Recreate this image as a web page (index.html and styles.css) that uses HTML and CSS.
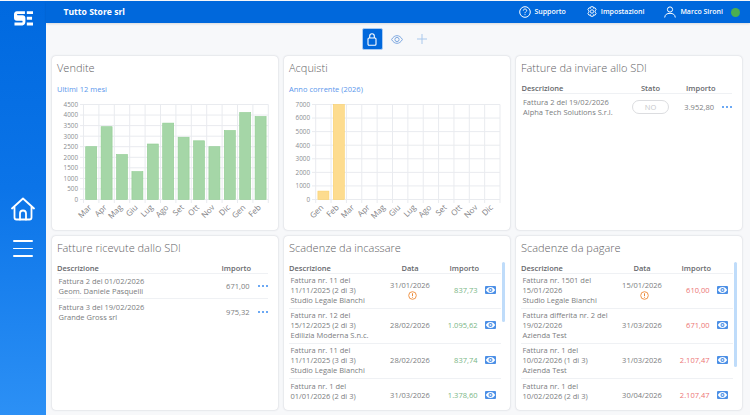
FILE: index.html
```html
<!DOCTYPE html>
<html lang="it">
<head>
<meta charset="utf-8">
<title>Tutto Store srl</title>
<link rel="stylesheet" href="styles.css">
</head>
<body>
<svg class="defs" width="0" height="0" aria-hidden="true">
  <symbol id="eye-btn" viewBox="0 0 11 8">
    <rect width="11" height="8" rx="1" fill="#4b8fe6"/>
    <path d="M.8 4C2.4 1.6 3.9 1 5.5 1s3.100.6 4.700 3C8.600 6.400 7.100 7 5.500 7S2.400 6.400.8 4z" fill="#fff"/>
    <circle cx="5.500" cy="4" r="2" fill="#4b8fe6"/>
    <circle cx="5.500" cy="4" r="1" fill="#dbe9fb"/>
  </symbol>
  <symbol id="warn" viewBox="0 0 9 9">
    <circle cx="4.500" cy="4.500" r="3.800" fill="none" stroke="#f0964a" stroke-width="1"/>
    <path d="M4.500 2.300v2.900M4.500 6v.7" stroke="#e9873a" stroke-width="1"/>
  </symbol>
</svg>
<div class="app">
  <aside class="sidebar">
    <svg class="logo" width="19" height="14.500" viewBox="0 0 20 15">
      <path d="M3 0h8.500v3H3.800a.6.6 0 0 0 0 1.300H9c2 0 3 1.300 3 3.300V11c0 2.400-1.200 4-3.200 4H.5v-3h8.100c.6 0 .6-1.800 0-1.800H3C1 10.200 0 9 0 7V3.500C0 1.300 1 0 3 0z" fill="#fff"/>
      <path d="M13.500 0H20v3h-6.500zM13.500 6H19v3h-5.500zM13.500 12H20v3h-6.500z" fill="#fff"/>
    </svg>
    <nav class="side-nav">
      <svg width="24" height="24" viewBox="0 0 24 24" fill="none" stroke="#fff" stroke-width="1.800" stroke-linejoin="round" stroke-linecap="round">
        <path d="M1 11.500 12 1.500l11 10M3.500 9.500v11a2 2 0 0 0 2 2h13a2 2 0 0 0 2-2v-11"/>
        <path d="M9 22.500v-6a3 3 0 0 1 6 0v6"/>
      </svg>
      <div class="burger"><span></span><span></span><span></span></div>
    </nav>
  </aside>
  <div class="content">
    <header class="topbar">
      <div class="company">Tutto Store srl</div>
      <div class="top-links">
        <a class="top-link">
          <svg width="12" height="12" viewBox="0 0 12 12" fill="none" stroke="#fff"><circle cx="6" cy="6" r="5.300"/><path d="M4.300 4.600C4.400 3.600 5.100 3 6 3c1 0 1.700.7 1.700 1.500C7.700 5.700 6 5.800 6 7.200M6 8.200v.9"/></svg>
          <span>Supporto</span>
        </a>
        <a class="top-link">
          <svg width="12" height="12" viewBox="0 0 12 12" fill="none" stroke="#fff" stroke-width=".9"><path d="M4.800.7h2.400l.3 1.600 1.500-.6 1.200 2-1.200 1.100v1.400l1.200 1.100-1.200 2-1.500-.6-.3 1.600H4.800l-.3-1.600-1.500.6-1.200-2 1.200-1.100V4.800L1.800 3.700l1.200-2 1.500.6z"/><circle cx="6" cy="5.500" r="1.700"/></svg>
          <span>Impostazioni</span>
        </a>
        <a class="top-link user-link">
          <svg width="12" height="12" viewBox="0 0 12 12" fill="none" stroke="#fff"><circle cx="6" cy="3.500" r="2.600"/><path d="M.7 11.500C1 8.500 3 7.300 6 7.300s5 1.200 5.300 4.200"/></svg>
          <span>Marco Sironi</span>
          <i class="status"></i>
        </a>
      </div>
    </header>
    <div class="toolbar">
      <button class="tool tool-active">
        <svg width="10" height="13" viewBox="0 0 10 13" fill="none" stroke="#fff" stroke-width="1.100"><rect x="1" y="5" width="8" height="7.300" rx="1"/><path d="M2.700 5V3a2.300 2.300 0 0 1 4.600 0v2"/></svg>
      </button>
      <button class="tool">
        <svg width="12" height="9" viewBox="0 0 12 9" fill="none" stroke="#7ea8e0"><path d="M.6 4.500C2.200 1.700 4 .7 6 .7s3.800 1 5.400 3.800C9.800 7.300 8 8.300 6 8.300S2.200 7.300.6 4.500z"/><circle cx="6" cy="4.500" r="2.100"/></svg>
      </button>
      <button class="tool">
        <svg width="10" height="10" viewBox="0 0 10 10" stroke="#a9c8ec" stroke-width="1"><path d="M5 0v10M0 5h10"/></svg>
      </button>
    </div>
    <main class="grid">
      <section class="card">
        <h2 class="card-title">Vendite</h2>
        <p class="card-sub">Ultimi 12 mesi</p>
        <svg class="chart" width="226" height="128" viewBox="0 0 226 128">
          <path class="grid-line" d="M31.500 6.500V105M46.900 6.500V105M62.300 6.500V105M77.700 6.500V105M93.100 6.500V105M108.500 6.500V105M123.900 6.500V105M139.300 6.500V105M154.700 6.500V105M170.100 6.500V105M185.500 6.500V105M200.900 6.500V105M216.300 6.500V105M28 6.500H216.300M28 17.060H216.300M28 27.600H216.300M28 38.200H216.300M28 48.700H216.300M28 59.300H216.300M28 69.800H216.300M28 80.400H216.300M28 90.900H216.300M28 101.500H216.300"/>
          <g class="bars-green">
            <rect x="33.700" y="48.700" width="11" height="52.800"/><rect x="49.100" y="28.700" width="11" height="72.800"/><rect x="64.500" y="56.500" width="11" height="45"/><rect x="79.900" y="73.600" width="11" height="27.900"/><rect x="95.300" y="46" width="11" height="55.500"/><rect x="110.700" y="25.100" width="11" height="76.400"/><rect x="126.100" y="39.200" width="11" height="62.300"/><rect x="141.500" y="42.800" width="11" height="58.700"/><rect x="156.900" y="48.700" width="11" height="52.800"/><rect x="172.300" y="32.500" width="11" height="69"/><rect x="187.700" y="14.500" width="11" height="87"/><rect x="203.100" y="18.500" width="11" height="83"/>
          </g>
          <g class="y-labels">
            <text x="26" y="8.800">4500</text><text x="26" y="19.400">4000</text><text x="26" y="29.900">3500</text><text x="26" y="40.500">3000</text><text x="26" y="51">2500</text><text x="26" y="61.600">2000</text><text x="26" y="72.100">1500</text><text x="26" y="82.700">1000</text><text x="26" y="93.200">500</text><text x="26" y="103.800">0</text>
          </g>
          <g class="x-labels">
            <text transform="translate(40 110) rotate(-45)">Mar</text><text transform="translate(55.400 110) rotate(-45)">Apr</text><text transform="translate(70.800 110) rotate(-45)">Mag</text><text transform="translate(86.200 110) rotate(-45)">Giu</text><text transform="translate(101.600 110) rotate(-45)">Lug</text><text transform="translate(117 110) rotate(-45)">Ago</text><text transform="translate(132.400 110) rotate(-45)">Set</text><text transform="translate(147.800 110) rotate(-45)">Ott</text><text transform="translate(163.200 110) rotate(-45)">Nov</text><text transform="translate(178.600 110) rotate(-45)">Dic</text><text transform="translate(194 110) rotate(-45)">Gen</text><text transform="translate(209.400 110) rotate(-45)">Feb</text>
          </g>
        </svg>
      </section>

      <section class="card">
        <h2 class="card-title">Acquisti</h2>
        <p class="card-sub">Anno corrente (2026)</p>
        <svg class="chart" width="226" height="128" viewBox="0 0 226 128">
          <path class="grid-line" d="M31.700 6.500V105M47.060 6.500V105M62.420 6.500V105M77.780 6.500V105M93.140 6.500V105M108.500 6.500V105M123.860 6.500V105M139.220 6.500V105M154.580 6.500V105M169.940 6.500V105M185.300 6.500V105M200.660 6.500V105M216 6.500V105M28 6.500H216M28 20.070H216M28 33.640H216M28 47.210H216M28 60.790H216M28 74.360H216M28 87.930H216M28 101.500H216"/>
          <g class="bars-yellow">
            <rect x="33.900" y="93.100" width="11" height="8.400"/><rect x="49.300" y="6.500" width="11" height="95"/>
          </g>
          <g class="y-labels">
            <text x="26" y="8.800">7000</text><text x="26" y="22.400">6000</text><text x="26" y="35.900">5000</text><text x="26" y="49.500">4000</text><text x="26" y="63.100">3000</text><text x="26" y="76.700">2000</text><text x="26" y="90.200">1000</text><text x="26" y="103.800">0</text>
          </g>
          <g class="x-labels">
            <text transform="translate(40 110) rotate(-45)">Gen</text><text transform="translate(55.400 110) rotate(-45)">Feb</text><text transform="translate(70.800 110) rotate(-45)">Mar</text><text transform="translate(86.200 110) rotate(-45)">Apr</text><text transform="translate(101.600 110) rotate(-45)">Mag</text><text transform="translate(117 110) rotate(-45)">Giu</text><text transform="translate(132.400 110) rotate(-45)">Lug</text><text transform="translate(147.800 110) rotate(-45)">Ago</text><text transform="translate(163.200 110) rotate(-45)">Set</text><text transform="translate(178.600 110) rotate(-45)">Ott</text><text transform="translate(194 110) rotate(-45)">Nov</text><text transform="translate(209.400 110) rotate(-45)">Dic</text>
          </g>
        </svg>
      </section>

      <section class="card">
        <h2 class="card-title">Fatture da inviare allo SDI</h2>
        <div class="doc-table send-table">
          <div class="doc-head"><span>Descrizione</span><span class="center">Stato</span><span class="right">Importo</span><span></span></div>
          <div class="doc-row">
            <div class="desc">Fattura 2 del 19/02/2026<br>Alpha Tech Solutions S.r.l.</div>
            <div class="center"><span class="pill">NO</span></div>
            <div class="right amount">3.952,80</div>
            <div class="dots"><i></i><i></i><i></i></div>
          </div>
        </div>
      </section>

      <section class="card">
        <h2 class="card-title">Fatture ricevute dallo SDI</h2>
        <div class="doc-table recv-table">
          <div class="doc-head"><span>Descrizione</span><span class="right">Importo</span><span></span></div>
          <div class="doc-row">
            <div class="desc">Fattura 2 del 01/02/2026<br>Geom. Daniele Pasquelli</div>
            <div class="right amount">671,00</div>
            <div class="dots"><i></i><i></i><i></i></div>
          </div>
          <div class="doc-row">
            <div class="desc">Fattura 3 del 19/02/2026<br>Grande Gross srl</div>
            <div class="right amount">975,32</div>
            <div class="dots"><i></i><i></i><i></i></div>
          </div>
        </div>
      </section>

      <section class="card">
        <h2 class="card-title">Scadenze da incassare</h2>
        <div class="due-head"><span>Descrizione</span><span class="center">Data</span><span class="right">Importo</span></div>
        <div class="due-list">
          <div class="due-row">
            <div class="desc">Fattura nr. 11 del<br>11/11/2025 (2 di 3)<br>Studio Legale Bianchi</div>
            <div class="center">31/01/2026<svg class="warn"><use href="#warn"/></svg></div>
            <div class="right amount in">837,73</div>
            <svg class="eye"><use href="#eye-btn"/></svg>
          </div>
          <div class="due-row">
            <div class="desc">Fattura nr. 12 del<br>15/12/2025 (2 di 3)<br>Edilizia Moderna S.n.c.</div>
            <div class="center">28/02/2026</div>
            <div class="right amount in">1.095,62</div>
            <svg class="eye"><use href="#eye-btn"/></svg>
          </div>
          <div class="due-row">
            <div class="desc">Fattura nr. 11 del<br>11/11/2025 (3 di 3)<br>Studio Legale Bianchi</div>
            <div class="center">28/02/2026</div>
            <div class="right amount in">837,74</div>
            <svg class="eye"><use href="#eye-btn"/></svg>
          </div>
          <div class="due-row">
            <div class="desc">Fattura nr. 1 del<br>01/01/2026 (2 di 3)</div>
            <div class="center">31/03/2026</div>
            <div class="right amount in">1.378,60</div>
            <svg class="eye"><use href="#eye-btn"/></svg>
          </div>
        </div>
        <i class="thumb thumb-short"></i>
      </section>

      <section class="card">
        <h2 class="card-title">Scadenze da pagare</h2>
        <div class="due-head"><span>Descrizione</span><span class="center">Data</span><span class="right">Importo</span></div>
        <div class="due-list">
          <div class="due-row">
            <div class="desc">Fattura nr. 1501 del<br>15/01/2026<br>Studio Legale Bianchi</div>
            <div class="center">15/01/2026<svg class="warn"><use href="#warn"/></svg></div>
            <div class="right amount out">610,00</div>
            <svg class="eye"><use href="#eye-btn"/></svg>
          </div>
          <div class="due-row">
            <div class="desc">Fattura differita nr. 2 del<br>19/02/2026<br>Azienda Test</div>
            <div class="center">31/03/2026</div>
            <div class="right amount out">671,00</div>
            <svg class="eye"><use href="#eye-btn"/></svg>
          </div>
          <div class="due-row">
            <div class="desc">Fattura nr. 1 del<br>10/02/2026 (1 di 3)<br>Azienda Test</div>
            <div class="center">31/03/2026</div>
            <div class="right amount out">2.107,47</div>
            <svg class="eye"><use href="#eye-btn"/></svg>
          </div>
          <div class="due-row">
            <div class="desc">Fattura nr. 1 del<br>10/02/2026 (2 di 3)</div>
            <div class="center">30/04/2026</div>
            <div class="right amount out">2.107,47</div>
            <svg class="eye"><use href="#eye-btn"/></svg>
          </div>
        </div>
        <i class="thumb thumb-long"></i>
      </section>
    </main>
  </div>
</div>
</body>
</html>
```

FILE: styles.css
```css
* { box-sizing: border-box; }
html, body { margin: 0; height: 100%; }
body {
  font-family: "Open Sans", "Noto Sans", sans-serif;
  font-size: 7.5px;
  line-height: 10px;
  color: #7b7d80;
  background: #f7f8fa;
  overflow: hidden;
}
.defs { position: absolute; }
.app { display: flex; height: 415px; padding-top: 1px; background: #f7f8fa; }

.sidebar {
  width: 46px;
  flex: none;
  display: flex;
  flex-direction: column;
  align-items: center;
  background: linear-gradient(180deg, #0069df 0%, #0b74e8 45%, #2c90f5 100%);
}
.logo { margin-top: 10px; }
.side-nav { margin-top: 171.500px; display: flex; flex-direction: column; align-items: center; gap: 19px; }
.burger { width: 20px; display: flex; flex-direction: column; gap: 6px; }
.burger span { display: block; height: 1.5px; background: #fff; border-radius: 1px; }

.content { flex: 1; min-width: 0; display: flex; flex-direction: column; }
.topbar {
  height: 22px;
  flex: none;
  display: flex;
  align-items: center;
  justify-content: space-between;
  padding: 0 10px 0 17.500px;
  background: #0068dc;
  color: #fff;
  box-shadow: 0 1px 2px rgba(0, 0, 0, .12);
}
.company { font-size: 8.6px; font-weight: 700; }
.top-links { display: flex; align-items: center; gap: 20px; font-size: 7px; font-weight: 600; }
.top-link { display: flex; align-items: center; gap: 3px; }
.user-link { gap: 4px; }
.status { width: 9px; height: 9px; margin-left: 4px; border-radius: 50%; background: #4caf50; }

.toolbar { height: 22px; margin-top: 5px; flex: none; display: flex; align-items: center; padding-left: 315.500px; gap: 3.500px; }
.tool { width: 21px; height: 22px; padding: 0; border: 0; background: none; display: flex; align-items: center; justify-content: center; }
.tool + .tool + .tool { width: 12px; margin-left: 5px; }
.tool-active { background: #0068dc; border: 1px solid #a9cbf3; border-radius: 2px; }

.grid {
  display: grid;
  grid-template-columns: repeat(3, 226px);
  grid-template-rows: 174px 174px;
  gap: 6px;
  margin: 6px 0 0 6px;
}
.card {
  position: relative;
  background: #fff;
  border-radius: 4px;
  padding: 5px 5px 0;
  overflow: hidden;
  box-shadow: 0 0 2px rgba(60, 70, 90, .28);
}
.card-title { margin: 0; font-size: 11px; line-height: 14px; font-weight: 300; color: #5f6266; }
.card-sub { margin: 8.500px 0 4.500px; font-size: 7.500px; line-height: 10px; color: #5b97ec; }
.chart { display: block; margin-left: -5px; }
.grid-line { fill: none; stroke: #e9ebef; stroke-width: 1; }
.bars-green rect { fill: #a5d6a7; stroke: #8fcc92; stroke-width: .6; }
.bars-yellow rect { fill: #fddc8f; stroke: #fbd06c; stroke-width: .6; }
.y-labels text { font-size: 6.300px; fill: #8a8c90; text-anchor: end; }
.x-labels text { font-size: 8px; fill: #7f8185; text-anchor: end; }

.center { text-align: center; }
.right { text-align: right; }
.amount { padding-right: 1.500px; }

.doc-table { margin-top: 8px; }
.doc-head, .due-head { font-weight: 600; color: #66686c; }
.doc-head { display: grid; height: 11px; align-items: start; border-bottom: 1.500px solid #eff1f4; }
.doc-row { display: grid; align-items: center; height: 25px; border-bottom: 1.500px solid #eff1f4; }
.doc-row:last-child { border-bottom: 0; }
.doc-row .desc { padding-left: 1.500px; white-space: nowrap; }
.send-table { margin-left: .5px; width: 210.500px; }
.send-table .doc-head, .send-table .doc-row { grid-template-columns: 108px 42px 44px 16.500px; }
.recv-table { width: 211px; }
.recv-table .doc-head, .recv-table .doc-row { grid-template-columns: 148px 46px 17px; }
.pill {
  display: inline-block;
  width: 37px;
  height: 14px;
  line-height: 12px;
  border: 1px solid #dcdde0;
  border-radius: 7px;
  color: #c6c8cb;
  text-align: center;
}
.dots { display: flex; justify-content: flex-end; gap: 2px; }
.dots i { width: 2px; height: 2px; border-radius: 50%; background: #3b8cf0; }

.due-head, .due-row { display: grid; grid-template-columns: 93px 56px 41px 17px; align-items: center; }
.due-head { height: 11px; margin-top: 8px; border-bottom: 1.500px solid #eff1f4; width: 212px; align-items: start; }
.due-list { height: 127.500px; width: 212px; overflow: hidden; }
.due-row { height: 35px; padding-bottom: 1.500px; border-bottom: 1.500px solid #eff1f4; }
.due-row .desc { padding-left: 1.500px; white-space: nowrap; }
.due-row:last-child .desc { align-self: start; padding-top: 1.750px; }
.due-row .center { display: flex; flex-direction: column; align-items: center; }
.eye { width: 11px; height: 8px; margin-left: 6px; }
.warn { width: 9px; height: 9px; margin-left: 4px; margin-top: 1px; display: block; }
.in { color: #79b585; }
.out { color: #ec7474; }
.thumb { position: absolute; left: 218px; top: 26px; width: 3px; border-radius: 2px; background: #bfdcfa; }
.thumb-short { height: 60px; }
.thumb-long { height: 105px; }
```
